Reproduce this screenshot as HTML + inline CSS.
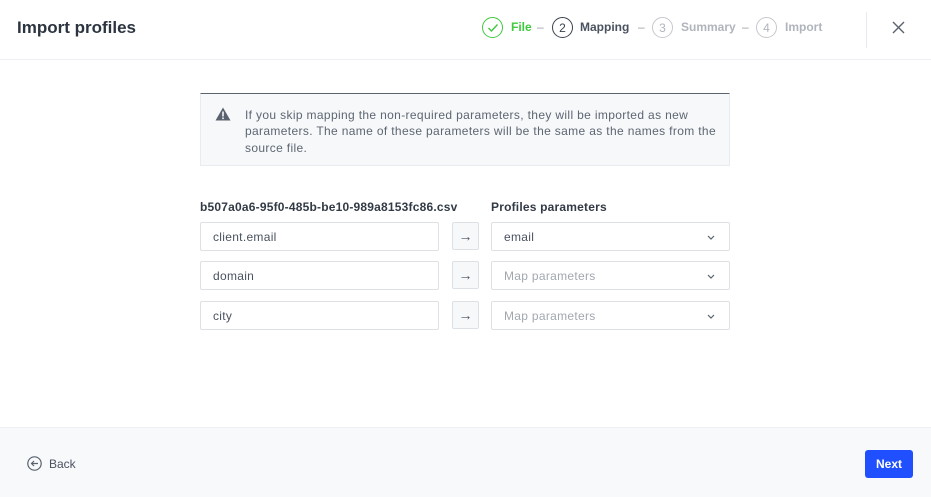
<!DOCTYPE html>
<html><head><style>
*{box-sizing:border-box;margin:0;padding:0}
body{width:931px;height:497px;font-family:"Liberation Sans",sans-serif;background:#fff;position:relative;overflow:hidden;color:#323a46}
.abs{position:absolute}
.hdr{top:0;left:0;width:931px;height:60px;border-bottom:1px solid #eef0f3}
.title{left:17px;top:18px;font-size:17px;font-weight:bold;color:#2c3440}
.circ{width:21px;height:21px;border-radius:50%;border:1px solid;font-size:12px;display:flex;align-items:center;justify-content:center;top:17px}
.st{top:20px;font-size:12px;font-weight:bold}
.dash{top:20px;font-size:12px;color:#9aa0a8}
.warn{left:200px;top:93px;width:530px;height:73px;background:#f6f8fa;border:1px solid #e8ebef;border-top:1px solid #5c6470}
.warn p{position:absolute;left:44px;top:13px;width:480px;font-size:12px;line-height:16.4px;color:#5e6672;letter-spacing:0.35px}
.lbl{top:200px;font-size:12px;font-weight:bold;color:#323a46;letter-spacing:0.2px}
.inp{left:200px;width:239px;height:29px;border:1px solid #dde1e6;border-radius:2px;font-size:12px;padding:7px 12px;color:#4a5260;letter-spacing:0.3px}
.arr{left:452px;width:27px;height:28px;border:1px solid #dde1e6;border-radius:2px;background:#f6f8fa;font-size:14px;display:flex;align-items:center;justify-content:center;color:#4a5260}
.sel{left:491px;width:239px;height:29px;border:1px solid #dde1e6;border-radius:2px;font-size:12px;padding:7px 12px;color:#4a5260;letter-spacing:0.3px}
.sel.ph{color:#a2a8b0}
.sel svg{position:absolute;right:14px;top:12px}
.ftr{left:0;top:427px;width:931px;height:70px;background:#f8f9fb;border-top:1px solid #eef0f3}
</style></head><body>
<div class="abs hdr"></div>
<div class="abs title">Import profiles</div>
<div class="abs circ" style="left:482px;border-color:#3ec93e;color:#3ec93e"><svg width="12" height="10" viewBox="0 0 12 10"><path d="M1.5 5l3 3 6-6.5" fill="none" stroke="#3ec93e" stroke-width="1.4"/></svg></div>
<div class="abs st" style="left:511px;color:#3ec93e">File</div>
<div class="abs dash" style="left:537px">–</div>
<div class="abs circ" style="left:552px;border-color:#3a424e;color:#3a424e">2</div>
<div class="abs st" style="left:580px;color:#4a5260">Mapping</div>
<div class="abs dash" style="left:638px">–</div>
<div class="abs circ" style="left:652px;border-color:#c4c8ce;color:#b0b5bc">3</div>
<div class="abs st" style="left:681px;color:#b0b5bc">Summary</div>
<div class="abs dash" style="left:742px">–</div>
<div class="abs circ" style="left:756px;border-color:#c4c8ce;color:#b0b5bc">4</div>
<div class="abs st" style="left:785px;color:#b0b5bc">Import</div>
<div class="abs" style="left:866px;top:12px;width:1px;height:36px;background:#e6e9ed"></div>
<svg class="abs" style="left:892px;top:21px" width="13" height="13" viewBox="0 0 13 13"><path d="M1 1l11 11M12 1L1 12" stroke="#5a626e" stroke-width="1.4"/></svg>

<div class="abs warn"><svg class="abs" style="left:14px;top:13px" width="16" height="14" viewBox="0 0 16 14"><path d="M8 0.5L15.5 13.5H0.5Z" fill="#5a626e"/><rect x="7.2" y="4.5" width="1.6" height="5" fill="#f6f8fa"/><rect x="7.2" y="10.5" width="1.6" height="1.6" fill="#f6f8fa"/></svg><p>If you skip mapping the non-required parameters, they will be imported as new parameters. The name of these parameters will be the same as the names from the source file.</p></div>

<div class="abs lbl" style="left:200px">b507a0a6-95f0-485b-be10-989a8153fc86.csv</div>
<div class="abs lbl" style="left:491px">Profiles parameters</div>

<div class="abs inp" style="top:222px">client.email</div>
<div class="abs arr" style="top:222px">→</div>
<div class="abs sel" style="top:222px">email<svg width="8" height="5" viewBox="0 0 8 5"><path d="M1 1l3 3 3-3" fill="none" stroke="#5a626e" stroke-width="1.2"/></svg></div>

<div class="abs inp" style="top:261px">domain</div>
<div class="abs arr" style="top:261px">→</div>
<div class="abs sel ph" style="top:261px">Map parameters<svg width="8" height="5" viewBox="0 0 8 5"><path d="M1 1l3 3 3-3" fill="none" stroke="#5a626e" stroke-width="1.2"/></svg></div>

<div class="abs inp" style="top:301px">city</div>
<div class="abs arr" style="top:301px">→</div>
<div class="abs sel ph" style="top:301px">Map parameters<svg width="8" height="5" viewBox="0 0 8 5"><path d="M1 1l3 3 3-3" fill="none" stroke="#5a626e" stroke-width="1.2"/></svg></div>

<div class="abs ftr"></div>
<svg class="abs" style="left:27px;top:456px" width="15" height="15" viewBox="0 0 15 15"><circle cx="7.5" cy="7.5" r="6.7" fill="none" stroke="#5a626e" stroke-width="1.2"/><path d="M11 7.5H4.5M7 5L4.5 7.5 7 10" fill="none" stroke="#5a626e" stroke-width="1.2"/></svg>
<div class="abs" style="left:49px;top:457px;font-size:12px;color:#4a5260">Back</div>
<div class="abs" style="left:865px;top:450px;width:48px;height:28px;background:#1f4fff;border-radius:3px;color:#fff;font-size:12px;font-weight:bold;display:flex;align-items:center;justify-content:center">Next</div>
</body></html>
